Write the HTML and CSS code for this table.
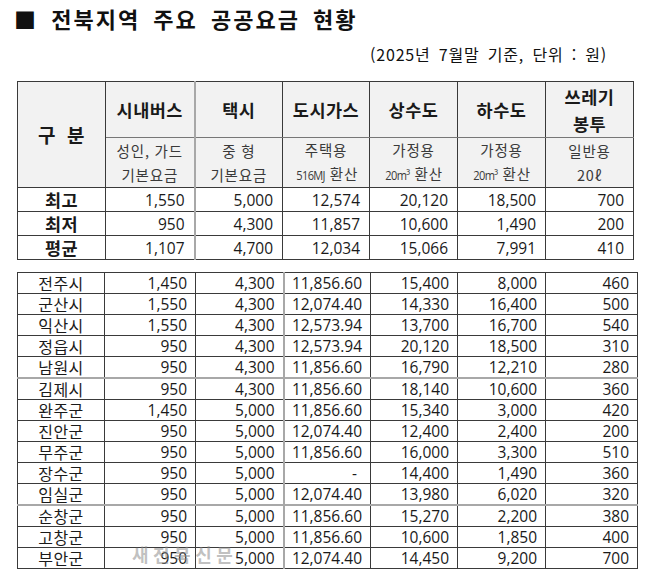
FILE: index.html
```html
<!DOCTYPE html>
<html lang="ko">
<head>
<meta charset="utf-8">
<link rel="stylesheet" href="styles.css">
</head>
<body>
<div class="page">
  <h1 class="title">■ 전북지역 주요 공공요금 현황</h1>
  <p class="note">(2025년 7월말 기준, 단위 : 원)</p>

  <table class="summary">
    <colgroup>
      <col class="c1"><col class="c2"><col class="c3"><col class="c4"><col class="c5"><col class="c6"><col class="c7">
    </colgroup>
    <thead>
      <tr class="head1">
        <th rowspan="2" class="gubun">구 분</th>
        <th class="sep">시내버스</th>
        <th>택시</th>
        <th>도시가스</th>
        <th>상수도</th>
        <th>하수도</th>
        <th class="two">쓰레기<br>봉투</th>
      </tr>
      <tr class="head2">
        <td class="sep">성인, 가드<br>기본요금</td>
        <td>중 형<br>기본요금</td>
        <td>주택용<br><span class="narrow">516MJ</span> 환산</td>
        <td>가정용<br><span class="narrow">20m³</span> 환산</td>
        <td>가정용<br><span class="narrow">20m³</span> 환산</td>
        <td>일반용<br>20ℓ</td>
      </tr>
    </thead>
    <tbody>
      <tr><th>최고</th><td class="sep">1,550</td><td>5,000</td><td>12,574</td><td>20,120</td><td>18,500</td><td>700</td></tr>
      <tr><th>최저</th><td class="sep">950</td><td>4,300</td><td>11,857</td><td>10,600</td><td>1,490</td><td>200</td></tr>
      <tr><th>평균</th><td class="sep">1,107</td><td>4,700</td><td>12,034</td><td>15,066</td><td>7,991</td><td>410</td></tr>
    </tbody>
  </table>

  <div class="detail-wrap">
    <table class="detail">
      <colgroup>
        <col class="d1"><col class="d2"><col class="d3"><col class="d4"><col class="d5"><col class="d6"><col class="d7">
      </colgroup>
      <tbody>
        <tr><th>전주시</th><td>1,450</td><td class="sep">4,300</td><td>11,856.60</td><td>15,400</td><td>8,000</td><td>460</td></tr>
        <tr><th>군산시</th><td>1,550</td><td class="sep">4,300</td><td>12,074.40</td><td>14,330</td><td>16,400</td><td>500</td></tr>
        <tr><th>익산시</th><td>1,550</td><td class="sep">4,300</td><td>12,573.94</td><td>13,700</td><td>16,700</td><td>540</td></tr>
        <tr><th>정읍시</th><td>950</td><td class="sep">4,300</td><td>12,573.94</td><td>20,120</td><td>18,500</td><td>310</td></tr>
        <tr class="grayline"><th>남원시</th><td>950</td><td class="sep">4,300</td><td>11,856.60</td><td>16,790</td><td>12,210</td><td>280</td></tr>
        <tr><th>김제시</th><td>950</td><td class="sep">4,300</td><td>11,856.60</td><td>18,140</td><td>10,600</td><td>360</td></tr>
        <tr><th>완주군</th><td>1,450</td><td class="sep">5,000</td><td>11,856.60</td><td>15,340</td><td>3,000</td><td>420</td></tr>
        <tr><th>진안군</th><td>950</td><td class="sep">5,000</td><td>12,074.40</td><td>12,400</td><td>2,400</td><td>200</td></tr>
        <tr><th>무주군</th><td>950</td><td class="sep">5,000</td><td>11,856.60</td><td>16,000</td><td>3,300</td><td>510</td></tr>
        <tr><th>장수군</th><td>950</td><td class="sep">5,000</td><td class="dash">-</td><td>14,400</td><td>1,490</td><td>360</td></tr>
        <tr class="grayline"><th>임실군</th><td>950</td><td class="sep">5,000</td><td>12,074.40</td><td>13,980</td><td>6,020</td><td>320</td></tr>
        <tr><th>순창군</th><td>950</td><td class="sep">5,000</td><td>11,856.60</td><td>15,270</td><td>2,200</td><td>380</td></tr>
        <tr><th>고창군</th><td>950</td><td class="sep">5,000</td><td>11,856.60</td><td>10,600</td><td>1,850</td><td>400</td></tr>
        <tr><th>부안군</th><td>950</td><td class="sep">5,000</td><td>12,074.40</td><td>14,450</td><td>9,200</td><td>700</td></tr>
      </tbody>
    </table>
    <div class="watermark">새전북신문</div>
  </div>
</div>
</body>
</html>
```

FILE: styles.css
```css
html, body {
  margin: 0;
  padding: 0;
  background: #fff;
}

body {
  font-family: "Open Sans", "Noto Sans CJK KR", sans-serif;
  color: #1a1a1a;
}

.page {
  width: 650px;
  height: 584px;
  padding-top: 3px;
  box-sizing: border-box;
  overflow: hidden;
}

.title {
  margin: 0 0 0 14px;
  font-family: "Noto Sans CJK KR", sans-serif;
  font-size: 22px;
  line-height: 30px;
  font-weight: 700;
  letter-spacing: 2px;
  word-spacing: 5px;
  color: #111;
}

.note {
  margin: 11px 0 0 0;
  padding-right: 43px;
  text-align: right;
  font-family: "Noto Sans CJK KR", sans-serif;
  font-size: 16px;
  line-height: 20px;
  letter-spacing: 0.8px;
  word-spacing: 3px;
  color: #111;
}

table {
  border-collapse: collapse;
  table-layout: fixed;
  margin-left: 17px;
}

td, th {
  padding: 0;
  border: 1px solid #3a3a3a;
}

/* summary table */
.summary {
  width: 616px;
  margin-top: 17px;
}
.summary .c1 { width: 88px; }
.summary .c2 { width: 89px; }
.summary .c3 { width: 88px; }
.summary .c4 { width: 87px; }
.summary .c5 { width: 88px; }
.summary .c6 { width: 88px; }
.summary .c7 { width: 88px; }

.summary thead th,
.summary thead td {
  background: #f2f2f2;
  text-align: center;
}

.head1 th {
  height: 54px;
  font-family: "Noto Sans CJK KR", sans-serif;
  font-size: 17.5px;
  font-weight: 700;
  line-height: 24px;
  letter-spacing: 0.5px;
  border-bottom-color: #777;
}

.head1 th.gubun {
  font-size: 19px;
  word-spacing: 5px;
  border-bottom-color: #3a3a3a;
}

.head1 th.two {
  line-height: 27px;
  padding-top: 1px;
}

.head2 td {
  height: 47px;
  font-family: "Noto Sans CJK KR", sans-serif;
  font-size: 14.5px;
  line-height: 24px;
  color: #3a3a3a;
  letter-spacing: 0.8px;
}

.narrow {
  display: inline-block;
  font-family: "Open Sans", sans-serif;
  font-size: 13.5px;
  letter-spacing: -0.8px;
  transform: scaleX(0.82);
  transform-origin: right center;
  margin-left: -4px;
}

.summary tbody th {
  height: 23px;
  font-family: "Noto Sans CJK KR", sans-serif;
  font-size: 17.5px;
  font-weight: 700;
  line-height: 22px;
  text-align: center;
  letter-spacing: 0.5px;
}

.summary tbody td {
  text-align: right;
  padding-right: 9px;
  font-size: 15.5px;
  line-height: 22px;
}

.summary .sep {
  border-right: 2px solid #a8a8a8;
}

/* detail table */
.detail-wrap {
  position: relative;
  margin-top: 12px;
}

.detail {
  width: 620px;
}
.detail .d1 { width: 87px; }
.detail .d2 { width: 91px; }
.detail .d3 { width: 88px; }
.detail .d4 { width: 87px; }
.detail .d5 { width: 87px; }
.detail .d6 { width: 88px; }
.detail .d7 { width: 92px; }

.detail th {
  height: 20px;
  font-family: "Noto Sans CJK KR", sans-serif;
  font-size: 16px;
  font-weight: 400;
  line-height: 20px;
  text-align: center;
  letter-spacing: 0.5px;
}

.detail td {
  text-align: right;
  padding-right: 8px;
  font-size: 15.5px;
  line-height: 20px;
}

.detail td.dash {
  padding-right: 13px;
}

.detail .sep {
  border-right: 2px solid #a8a8a8;
}

.detail tr.grayline th,
.detail tr.grayline td {
  border-bottom: 2px solid #a8a8a8;
}

.watermark {
  position: absolute;
  left: 132px;
  top: 272px;
  font-family: "Noto Sans CJK KR", sans-serif;
  font-size: 18px;
  font-weight: 700;
  line-height: 20px;
  letter-spacing: 4.5px;
  color: rgba(140, 140, 140, 0.55);
  pointer-events: none;
}
```
